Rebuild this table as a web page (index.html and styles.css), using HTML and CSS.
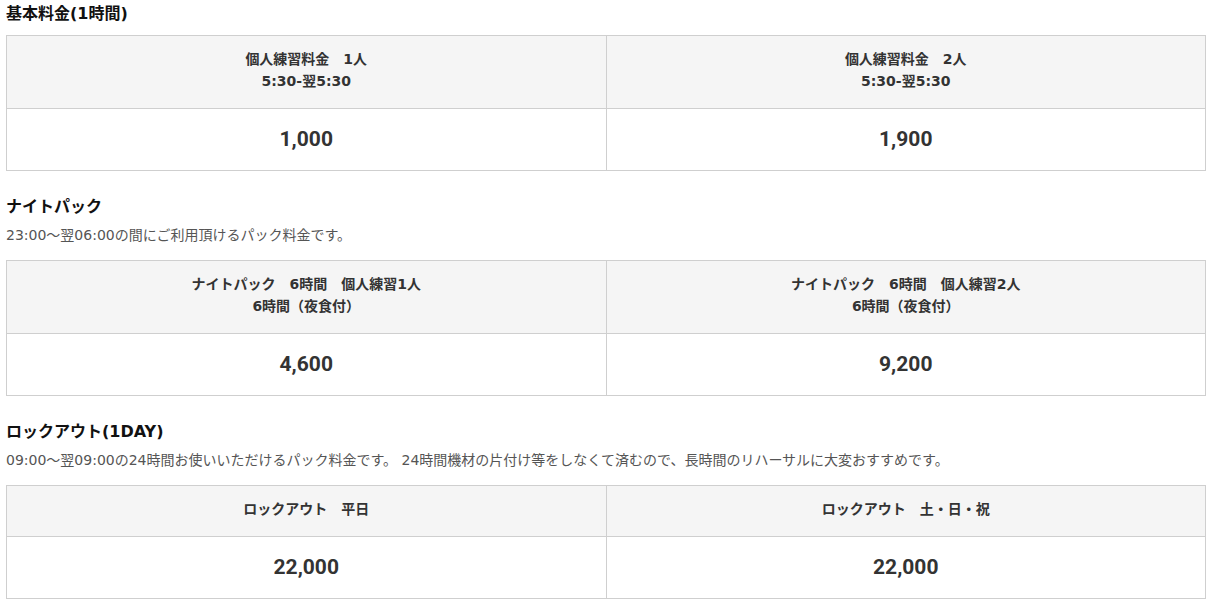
FILE: index.html
```html
<!DOCTYPE html>
<html lang="ja">
<head>
<meta charset="utf-8">
<link rel="stylesheet" href="styles.css">
</head>
<body>
<div class="page">
  <section class="block first">
    <h3 class="title">基本料金(1時間)</h3>
    <table class="price">
      <tr class="head">
        <th>個人練習料金　1人<br>5:30-翌5:30</th>
        <th>個人練習料金　2人<br>5:30-翌5:30</th>
      </tr>
      <tr class="vals">
        <td>1,000</td>
        <td>1,900</td>
      </tr>
    </table>
  </section>

  <section class="block">
    <h3 class="title">ナイトパック</h3>
    <p class="desc">23:00～翌06:00の間にご利用頂けるパック料金です。</p>
    <table class="price">
      <tr class="head">
        <th>ナイトパック　6時間　個人練習1人<br>6時間（夜食付）</th>
        <th>ナイトパック　6時間　個人練習2人<br>6時間（夜食付）</th>
      </tr>
      <tr class="vals">
        <td>4,600</td>
        <td>9,200</td>
      </tr>
    </table>
  </section>

  <section class="block">
    <h3 class="title">ロックアウト(1DAY)</h3>
    <p class="desc">09:00～翌09:00の24時間お使いいただけるパック料金です。 24時間機材の片付け等をしなくて済むので、長時間のリハーサルに大変おすすめです。</p>
    <table class="price">
      <tr class="head">
        <th>ロックアウト　平日</th>
        <th>ロックアウト　土・日・祝</th>
      </tr>
      <tr class="vals">
        <td>22,000</td>
        <td>22,000</td>
      </tr>
    </table>
  </section>
</div>
</body>
</html>
```

FILE: styles.css
```css
* { box-sizing: border-box; }
html, body {
  margin: 0;
  padding: 0;
  background: #fff;
}
body {
  font-family: "DejaVu Sans", "Noto Sans CJK JP", sans-serif;
  color: #333;
}
.page {
  padding: 2px 0 0 6px;
  width: 1206px;
}
.block {
  margin-top: 24px;
}
.block.first {
  margin-top: 0;
}
.title {
  margin: 0;
  font-size: 16px;
  line-height: 24px;
  font-weight: bold;
  color: #111;
}
.first .title {
  margin-bottom: 9px;
}
.desc {
  margin: 6px 0 15px;
  font-size: 14px;
  line-height: 20px;
  color: #555;
}
.price {
  width: 1200px;
  border-collapse: collapse;
  table-layout: fixed;
}
.price th, .price td {
  border: 1px solid #cfcfcf;
  text-align: center;
  width: 50%;
}
.price .head th {
  background: #f5f5f5;
  font-size: 14px;
  line-height: 22px;
  font-weight: bold;
  padding: 12px 0 16px;
  color: #333;
}
.price .vals td {
  font-family: Roboto, "Noto Sans", sans-serif;
  font-weight: bold;
  font-size: 21px;
  line-height: 30px;
  padding: 15px 0 16px;
  color: #333;
}
```
